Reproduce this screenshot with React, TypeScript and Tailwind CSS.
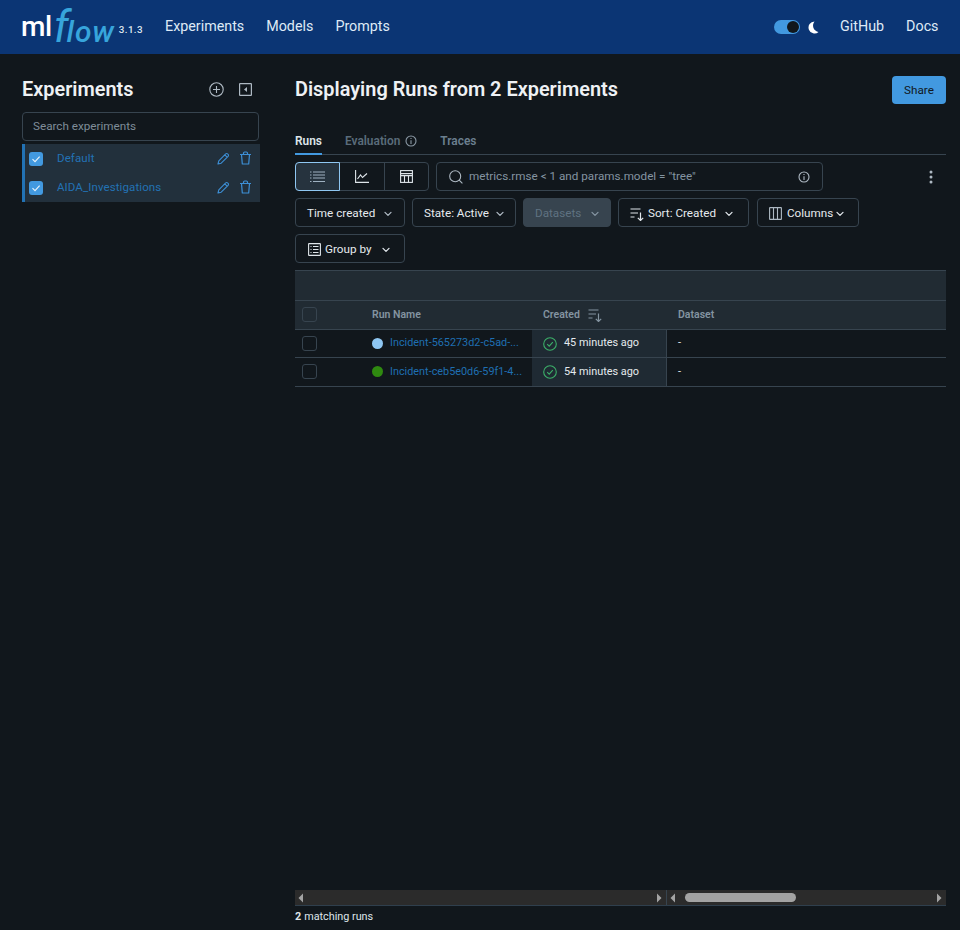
import React from "react";

const Chevron = ({ className = "" }: { className?: string }) => (
  <svg width="8" height="8" viewBox="0 0 8 8" fill="none" className={className}>
    <path d="M1 2.4 4 5.4l3-3" stroke="currentColor" strokeWidth="1.3" strokeLinecap="round" strokeLinejoin="round" />
  </svg>
);

const SortIcon = ({ className = "" }: { className?: string }) => (
  <svg width="14" height="14" viewBox="0 0 14 14" fill="none" stroke="currentColor" strokeWidth="1.2" className={className}>
    <path d="M0.5 2h10M0.5 6h7.5M0.5 10h4M10.5 5.5v8M7.8 10.8l2.7 2.7 2.7-2.7" />
  </svg>
);

const Check = () => (
  <span className="flex h-[14px] w-[14px] shrink-0 items-center justify-center rounded-[3px] bg-[#4299e0]">
    <svg width="10" height="10" viewBox="0 0 10 10" fill="none">
      <path d="M1.5 5.2 4 7.6l4.6-5" stroke="#eaf4fb" strokeWidth="1.1" />
    </svg>
  </span>
);

const Pencil = () => (
  <svg width="13" height="13" viewBox="0 0 13 13" fill="none" stroke="#3d8fd6" strokeWidth="1.1" strokeLinejoin="round">
    <path d="M1 12l.8-3.2 6.9-6.9a1.3 1.3 0 0 1 1.9 0l.5.5a1.3 1.3 0 0 1 0 1.9L4.2 11.2 1 12zM7.8 2.9l2.3 2.3" />
  </svg>
);

const Trash = () => (
  <svg width="13" height="14" viewBox="0 0 13 14" fill="none" stroke="#3d8fd6" strokeWidth="1.2" strokeLinejoin="round" className="-mt-[2px]">
    <path d="M1 3.5h11M2.5 3.5l.8 9.5h6.4l.8-9.5M4.5 3.5V2.2A1.2 1.2 0 0 1 5.7 1h1.6a1.2 1.2 0 0 1 1.2 1.2v1.3" />
  </svg>
);

const Info = ({ color = "#aeb9c3" }: { color?: string }) => (
  <svg width="12" height="12" viewBox="0 0 12 12" fill="none" stroke={color} strokeWidth="1.1">
    <circle cx="6" cy="6" r="5" />
    <path d="M6 5.2V9M6 3v1.1" />
  </svg>
);

const RowCheck = () => (
  <span className="-mt-[1px] ml-[7px] h-[15px] w-[15px] shrink-0 rounded-[3px] border border-[#37444f]" />
);

const StatusOk = () => (
  <svg width="14" height="14" viewBox="0 0 14 14" fill="none" stroke="#3caf69" strokeWidth="1.1" className="shrink-0">
    <circle cx="7" cy="7" r="6.3" />
    <path d="M4.2 7.2 6.2 9.1 9.8 5.2" />
  </svg>
);

const FilterButton = ({
  width,
  children,
  disabled,
}: {
  width: string;
  children: React.ReactNode;
  disabled?: boolean;
}) => (
  <div
    className={`flex h-[29px] items-center rounded-[4px] border border-[#37444f] pt-[2px] ${width} ${
      disabled ? "bg-[#37444f] text-[#5f7281]" : "text-[#e5eaee]"
    }`}
  >
    {children}
  </div>
);

const Row = ({ dot, name, ago, height }: { dot: string; name: string; ago: string; height: string }) => (
  <div className={`flex items-center border-b border-[#37444f] text-[10.9px] ${height}`}>
    <div className="flex w-[77px] shrink-0 items-center">
      <RowCheck />
    </div>
    <div className="flex w-[160px] shrink-0 items-center">
      <span className={`h-[11px] w-[11px] shrink-0 rounded-full ${dot}`} />
      <span className="ml-[7px] whitespace-nowrap text-[10.85px] text-[#1f6fb2]">{name}</span>
    </div>
    <div className="flex h-full w-[135px] shrink-0 items-center gap-[7px] border-r border-[#37444f] bg-[#1f2a33] pl-[11px] text-[#e5eaee]">
      <StatusOk />
      <span className="whitespace-nowrap">{ago}</span>
    </div>
    <div className="pl-[11px] text-[#e5eaee]">-</div>
  </div>
);

const ScrollArrow = ({ right }: { right?: boolean }) => (
  <svg width="6" height="10" viewBox="0 0 6 10" fill="#a3a3a3" className="shrink-0">
    <path d={right ? "M1 0.5 5.5 5 1 9.5z" : "M5 0.5.5 5 5 9.5z"} />
  </svg>
);

export default function App() {
  return (
    <div
      className="flex h-[930px] w-[960px] flex-col overflow-hidden bg-[#11171c] text-[#e5eaee]"
      style={{ fontFamily: "Roboto, sans-serif" }}
    >
      {/* Header */}
      <header className="flex h-[54px] shrink-0 items-center bg-[#0b3574] pl-[21px] pr-[21.5px]">
        <div className="flex w-[144px] shrink-0 items-center">
          <span className="text-[28px] leading-none font-medium tracking-[-0.4px] text-white">ml</span>
          <span className="ml-[2px] flex items-baseline leading-none font-medium text-[#37a5dc] italic">
            <span className="text-[44px] leading-none font-normal">f</span>
            <span className="-ml-[2px] text-[30px] leading-none tracking-[0.9px]">low</span>
          </span>
          <span className="mt-[7px] ml-[4px] text-[9.8px] font-medium tracking-[0.4px] text-[#dfe6ee]">3.1.3</span>
        </div>
        <nav className="flex items-center gap-[22px] text-[14.3px] text-[#dfeaf6]">
          <span>Experiments</span>
          <span>Models</span>
          <span>Prompts</span>
        </nav>
        <div className="ml-auto flex items-center text-[14.3px] text-[#dfeaf6]">
          <span className="flex h-[14px] w-[26px] items-center justify-end rounded-full bg-[#4299e0] pr-[1px]">
            <span className="h-[12px] w-[12px] rounded-full bg-[#11171c]" />
          </span>
          <svg width="12" height="13" viewBox="0 0 12 13" fill="#ffffff" className="ml-[7px]">
            <path d="M7.5.5A6 6 0 1 0 11.5 11 6.5 6.5 0 0 1 7.5.5z" />
          </svg>
          <span className="ml-[21px]">GitHub</span>
          <span className="ml-[22px]">Docs</span>
        </div>
      </header>

      <div className="flex min-h-0 flex-1">
        {/* Sidebar */}
        <aside className="w-[295px] shrink-0 pt-[22px] pl-[22px]">
          <div className="flex h-[26px] w-[238px] items-center">
            <h2 className="pt-[2px] text-[19.9px] leading-none font-semibold text-[#eef1f4]">Experiments</h2>
            <svg width="15" height="15" viewBox="0 0 15 15" fill="none" stroke="#aeb9c3" strokeWidth="1.1" className="ml-auto">
              <circle cx="7.5" cy="7.5" r="6.7" />
              <path d="M7.5 4v7M4 7.5h7" />
            </svg>
            <svg width="13" height="13" viewBox="0 0 13 13" fill="none" stroke="#aeb9c3" strokeWidth="1.2" className="mr-[8px] ml-[15px]">
              <rect x="0.6" y="0.6" width="11.8" height="11.8" rx="0.5" />
              <path d="M8 4v5L5 6.5z" fill="#aeb9c3" stroke="none" />
            </svg>
          </div>
          <div className="mt-[10px] flex h-[29px] w-[237px] items-center rounded-[4px] border border-[#37444f] pl-[10px] text-[11.7px] text-[#7f8d99]">
            Search experiments
          </div>
          <div className="mt-[3px] w-[238px] border-l-[3px] border-[#2272b4] bg-[#22303c]">
            {["Default", "AIDA_Investigations"].map((name) => (
              <div key={name} className="flex h-[29px] items-center pl-[4px]">
                <Check />
                <span className="ml-[14px] text-[11.5px] tracking-[0.1px] text-[#2272b4]">{name}</span>
                <span className="ml-auto flex items-center gap-[9px] pr-[8px]">
                  <Pencil />
                  <Trash />
                </span>
              </div>
            ))}
          </div>
        </aside>

        {/* Main */}
        <main className="flex min-w-0 flex-1 flex-col pr-[14px]">
          <div className="flex h-[50px] shrink-0 items-end justify-between">
            <h1 className="pb-[1px] text-[19.9px] leading-[26px] font-semibold text-[#eef1f4]">
              Displaying Runs from 2 Experiments
            </h1>
            <div className="flex h-[28px] w-[54px] items-center justify-center rounded-[4px] bg-[#4299e0] pt-[1px] text-[11.7px] text-[#11171c]">
              Share
            </div>
          </div>

          {/* Tabs */}
          <div className="mt-[27px] flex h-[24px] shrink-0 items-start gap-[19px] border-b border-[#37444f] text-[11.9px] font-semibold text-[#6b7f8f]">
            <span className="h-[24px] border-b-[2px] border-[#4299e0] pt-[3px] leading-[14px] text-[#dfe5ea]">Runs</span>
            <span className="ml-[4px] flex items-center gap-[5px] pt-[3px] leading-[14px] text-[#5a6c7a]">
              Evaluation <Info color="#8b99a5" />
            </span>
            <span className="ml-[4px] pt-[3px] leading-[14px]">Traces</span>
          </div>

          {/* Toolbar */}
          <div className="mt-[7px] flex h-[29px] shrink-0 items-center">
            <div className="flex h-full w-[134px] rounded-[4px] border border-[#37444f]">
              <div className="-my-px -ml-px flex w-[45px] items-center justify-center rounded-l-[4px] border border-[#8fc7f2] bg-[#26333e]">
                <svg width="15" height="12" viewBox="0 0 15 12" fill="none" stroke="#9fb2c2" strokeWidth="1.1">
                  <path d="M0 1h1.5M3 1h12M0 4h1.5M3 4h12M0 7h1.5M3 7h12M0 10.5h1.5M3 10.5h12" />
                </svg>
              </div>
              <div className="flex w-[45px] items-center justify-center border-r border-[#37444f]">
                <svg width="14" height="13" viewBox="0 0 14 13" fill="none" stroke="#dfe5ea" strokeWidth="1.1">
                  <path d="M.6 0v12.4H14M2.5 9 5.5 5l2 2.5L12 3.5" />
                </svg>
              </div>
              <div className="flex flex-1 items-center justify-center">
                <svg width="13" height="13" viewBox="0 0 13 13" fill="none" stroke="#dfe5ea" strokeWidth="1.1">
                  <rect x="0.6" y="0.6" width="11.8" height="11.8" />
                  <path d="M.6 3.6h11.8M.6 5.6h11.8M4.5 5.6v6.8M8.5 5.6v6.8" />
                </svg>
              </div>
            </div>
            <div className="ml-[7px] flex h-full w-[387px] items-center rounded-[4px] border border-[#37444f] pr-[12px] pl-[12px] text-[11.7px] text-[#8494a1]">
              <svg width="14" height="14" viewBox="0 0 14 14" fill="none" stroke="#aeb9c3" strokeWidth="1.1" className="shrink-0">
                <circle cx="6.2" cy="6.2" r="5.5" />
                <path d="m10.2 10.2 3.2 3.2" />
              </svg>
              <span className="ml-[6px] whitespace-nowrap">metrics.rmse &lt; 1 and params.model = "tree"</span>
              <span className="ml-auto">
                <Info />
              </span>
            </div>
            <svg width="4" height="14" viewBox="0 0 4 14" fill="#aeb9c3" className="ml-auto mr-[13px]">
              <circle cx="2" cy="2" r="1.5" />
              <circle cx="2" cy="7" r="1.5" />
              <circle cx="2" cy="12" r="1.5" />
            </svg>
          </div>

          {/* Filters */}
          <div className="mt-[7px] flex shrink-0 flex-wrap gap-x-[7px] gap-y-[7px] text-[11.7px]">
            <FilterButton width="w-[110px]">
              <span className="ml-[11px]">Time created</span>
              <Chevron className="ml-[9px] text-[#aeb9c3]" />
            </FilterButton>
            <FilterButton width="w-[104px]">
              <span className="ml-[11px]">State: Active</span>
              <Chevron className="ml-[7px] text-[#aeb9c3]" />
            </FilterButton>
            <FilterButton width="w-[88px]" disabled>
              <span className="ml-[11px]">Datasets</span>
              <Chevron className="ml-[10px] text-[#8494a1]" />
            </FilterButton>
            <FilterButton width="w-[131px]">
              <SortIcon className="ml-[11px] text-[#dfe5ea]" />
              <span className="ml-[4px]">Sort: Created</span>
              <Chevron className="ml-[9px] text-[#dfe5ea]" />
            </FilterButton>
            <FilterButton width="ml-[1px] w-[102px]">
              <svg width="13" height="13" viewBox="0 0 13 13" fill="none" stroke="#aeb9c3" strokeWidth="1.1" className="ml-[11px]">
                <rect x="0.6" y="0.6" width="11.8" height="11.8" rx="0.5" />
                <path d="M4.5.6v11.8M8.5.6v11.8" />
              </svg>
              <span className="ml-[5px]">Columns</span>
              <Chevron className="ml-[3px] text-[#dfe5ea]" />
            </FilterButton>
            <FilterButton width="w-[110px]">
              <svg width="13" height="13" viewBox="0 0 13 13" fill="none" stroke="#dfe5ea" strokeWidth="1.1" className="ml-[12px]">
                <rect x="0.6" y="0.6" width="11.8" height="11.8" rx="0.5" />
                <path d="M2.5 3.5h1M5 3.5h5.5M2.5 6.5h1M5 6.5h5.5M2.5 9.5h1M5 9.5h5.5" />
              </svg>
              <span className="ml-[4px]">Group by</span>
              <Chevron className="ml-[11px] text-[#dfe5ea]" />
            </FilterButton>
          </div>

          {/* Table */}
          <div className="mt-[7px] min-h-0 flex-1">
            <div className="h-[31px] border-y border-[#37444f] bg-[#212b33]" />
            <div className="flex h-[29px] items-center border-b border-[#37444f] bg-[#212b33] text-[10.5px] font-semibold text-[#8494a1]">
              <div className="flex w-[77px] shrink-0 items-center">
                <RowCheck />
              </div>
              <div className="w-[160px] shrink-0">Run Name</div>
              <div className="flex w-[135px] shrink-0 items-center gap-[8px] pl-[11px]">
                Created
                <SortIcon className="text-[#8494a1]" />
              </div>
              <div className="pl-[11px]">Dataset</div>
            </div>
            <Row height="h-[28px]" dot="bg-[#8fc7f2]" name="Incident-565273d2-c5ad-..." ago="45 minutes ago" />
            <Row height="h-[29px]" dot="bg-[#2f8a10]" name="Incident-ceb5e0d6-59f1-4..." ago="54 minutes ago" />
          </div>

          {/* Scrollbars */}
          <div className="flex h-[16px] shrink-0 border-b border-[#2f3f4d] bg-[#2b2b2b]">
            <div className="flex w-[372px] shrink-0 items-center justify-between border-r border-[#37444f] pr-[4px] pl-[3px]">
              <ScrollArrow />
              <ScrollArrow right />
            </div>
            <div className="flex flex-1 items-center pr-[4px] pl-[3px]">
              <ScrollArrow />
              <span className="ml-[9px] h-[9px] w-[111px] rounded-full bg-[#a3a3a3]" />
              <span className="ml-auto flex">
                <ScrollArrow right />
              </span>
            </div>
          </div>
          <div className="flex h-[24px] shrink-0 items-center pb-[1px] text-[10.8px] text-[#dfe5ea]">
            <b className="font-bold">2</b>
            <span className="ml-[3px]">matching runs</span>
          </div>
        </main>
      </div>
    </div>
  );
}
